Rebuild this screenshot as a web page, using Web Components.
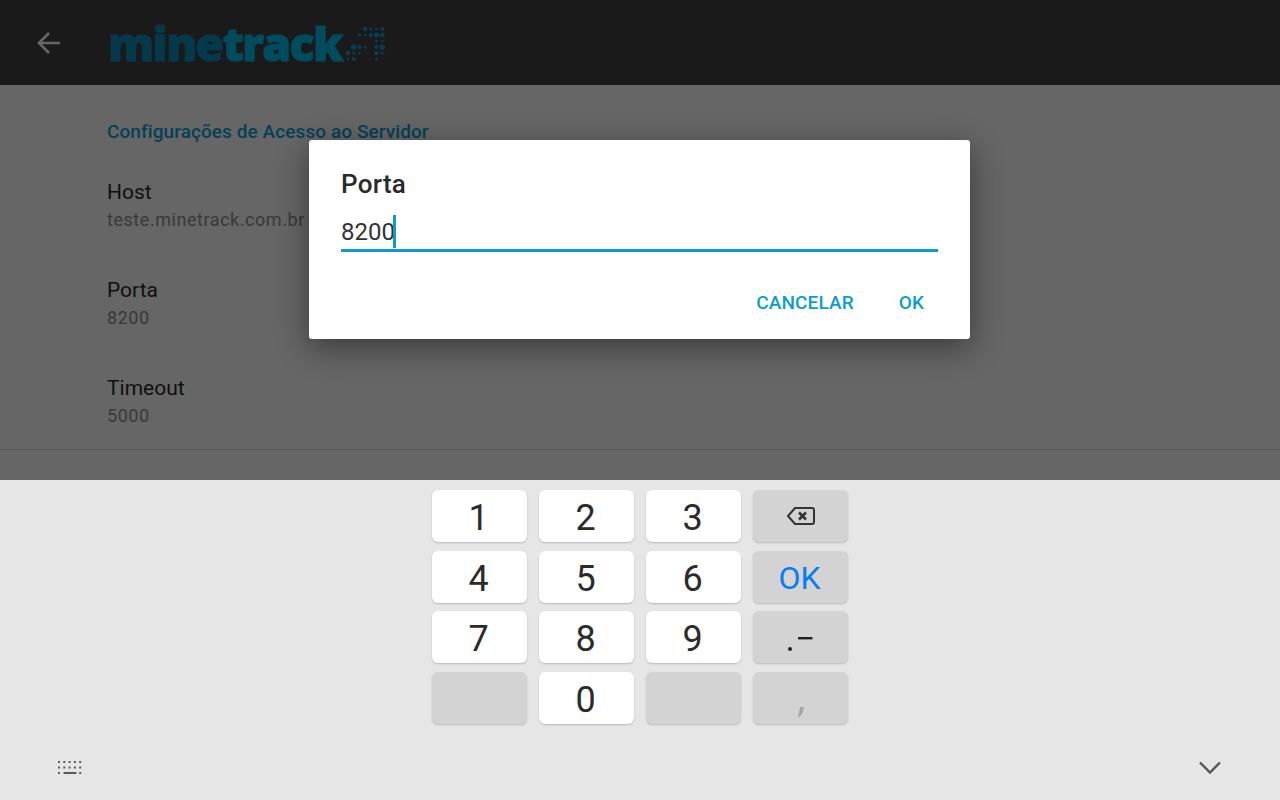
<!DOCTYPE html>
<html lang="pt-BR">
<head>
<meta charset="utf-8">
<title>minetrack</title>
<style>
  html, body { margin: 0; height: 100%; overflow: hidden; }
  body { font-family: Roboto, "Liberation Sans", sans-serif; background: #e6e6e6; }
</style>
</head>
<body>
<settings-screen>
  <app-toolbar slot="top"></app-toolbar>
  <pref-category slot="list">Configurações de Acesso ao Servidor</pref-category>
  <pref-item slot="list" label="Host" value="teste.minetrack.com.br"></pref-item>
  <pref-item slot="list" label="Porta" value="8200"></pref-item>
  <pref-item slot="list" label="Timeout" value="5000" divider></pref-item>
  <port-dialog slot="overlay" heading="Porta" value="8200"></port-dialog>
  <num-keypad slot="bottom"></num-keypad>
</settings-screen>

<script>
class SettingsScreen extends HTMLElement {
    constructor() {
        super();
        this.attachShadow({ mode: 'open' });
        this.shadowRoot.innerHTML = `
            <style>
                :host { display: flex; flex-direction: column; width: 1280px; height: 800px; }
                .page { position: relative; height: 480px; background: #fff; overflow: hidden; display: flex; flex-direction: column; }
                .list { display: flex; flex-direction: column; }
                .scrim { position: absolute; inset: 0; background: rgba(0,0,0,.6); }
            </style>
            <div class="page">
                <slot name="top"></slot>
                <div class="list"><slot name="list"></slot></div>
                <div class="scrim"></div>
                <slot name="overlay"></slot>
            </div>
            <slot name="bottom"></slot>
        `;
    }
}

class AppToolbar extends HTMLElement {
    constructor() {
        super();
        this.attachShadow({ mode: 'open' });
        // dots of the logo mark, row by row
        const rows = [
            [0, 0, 0, 1, 1, 1, 1],
            [0, 0, 1, 1, 1, 1, 1],
            [0, 0, 0, 0, 0, 1, 1],
            [0, 1, 1, 1, 0, 1, 1],
            [1, 1, 1, 0, 0, 1, 1],
            [1, 1, 0, 0, 0, 1, 0]
        ];
        const sizes = [1.3, 2, 2.7, 2.3, 1.6];
        let dots = '';
        rows.forEach((row, y) => row.forEach((on, x) => {
            if (on) dots += `<circle cx="${3 + x * 5.7}" cy="${3 + y * 6}" r="${sizes[(x + y * 2) % 5]}"/>`;
        }));
        this.shadowRoot.innerHTML = `
            <style>
                :host { display: flex; align-items: center; height: 85px; background: #424242; flex: none; }
                .back { width: 26px; height: 26px; margin-left: 36px; color: #fff; display: block; }
                .logo { display: flex; align-items: center; margin-left: 46px; font: 800 46px/1 "Open Sans", Lato, sans-serif; letter-spacing: -1.4px; -webkit-text-stroke: 1.1px currentColor; }
                .mine { color: #00a0d8; opacity: .82; }
                .track { color: #00bcec; }
                .mark { width: 40px; height: 36px; fill: #00b4e6; margin-left: 3px; margin-top: 2px; opacity: .8; filter: blur(.5px); }
            </style>
            <svg class="back" viewBox="0 0 26 26" fill="none" stroke="currentColor" stroke-width="2.6">
                <path d="M24 13H4M13 3 3 13l10 10"/>
            </svg>
            <div class="logo"><span class="mine">mine</span><span class="track">track</span>
                <svg class="mark" viewBox="0 0 40 36">${dots}</svg>
            </div>
        `;
    }
}

class PrefCategory extends HTMLElement {
    constructor() {
        super();
        this.attachShadow({ mode: 'open' });
        this.shadowRoot.innerHTML = `
            <style>
                :host { display: block; padding: 36px 0 0 107px; height: 45px; color: #0ba4dc; font: 500 19px/22px Roboto, sans-serif; letter-spacing: .08px; }
            </style>
            <slot></slot>
        `;
    }
}

class PrefItem extends HTMLElement {
    constructor() {
        super();
        this.attachShadow({ mode: 'open' });
    }

    connectedCallback() {
        this.render();
    }

    render() {
        this.shadowRoot.innerHTML = `
            <style>
                :host { display: block; height: 98px; padding-left: 107px; box-sizing: border-box; padding-top: 12px; font-family: Roboto, sans-serif; }
                :host([divider]) { height: 88px; }
                .label { font-size: 21px; line-height: 28px; color: #2a2a2a; }
                .value { font-size: 18px; line-height: 26px; color: #8f8f8f; letter-spacing: .55px; margin-top: 1px; }
            </style>
            <div class="label">${this.getAttribute('label')}</div>
            <div class="value">${this.getAttribute('value')}</div>
        `;
        if (this.hasAttribute('divider')) {
            this.style.borderBottom = '1px solid #d8d8d8';
        }
    }
}

class PortDialog extends HTMLElement {
    constructor() {
        super();
        this.attachShadow({ mode: 'open' });
    }

    connectedCallback() {
        this.shadowRoot.innerHTML = `
            <style>
                :host { position: absolute; left: 309px; top: 140px; width: 661px; height: 199px; box-sizing: border-box; padding: 28px 32px 0; background: #fff; border-radius: 3px;
                    box-shadow: 0 8px 32px rgba(0,0,0,.45); font-family: Roboto, sans-serif; display: flex; flex-direction: column; }
                h2 { margin: 0; font: 500 26px/32px Roboto, sans-serif; letter-spacing: .3px; color: #2a2a2a; }
                .field { display: flex; align-items: center; margin-top: 13px; border-bottom: 3px solid #0b9dcd; font-size: 24px; color: #333; padding-top: 1px; height: 35px; }
                .field span:first-child { margin-top: 0; }
                .caret { width: 3px; height: 33px; background: #0b9dcd; margin-left: -2px; margin-top: -1px; }
                .actions { display: flex; justify-content: flex-end; gap: 45px; margin-top: 39px; padding-right: 14px; }
                .btn { font: 500 19px/24px Roboto, sans-serif; color: #0b9dcd; letter-spacing: .1px; }
            </style>
            <h2>${this.getAttribute('heading')}</h2>
            <div class="field"><span>${this.getAttribute('value')}</span><span class="caret"></span></div>
            <div class="actions"><span class="btn">CANCELAR</span><span class="btn">OK</span></div>
        `;
    }
}

class KeyCap extends HTMLElement {
    constructor() {
        super();
        this.attachShadow({ mode: 'open' });
        this.shadowRoot.innerHTML = `
            <style>
                :host { display: flex; align-items: center; justify-content: center; height: 48px; padding: 4px 2px 0 0; border-radius: 6px; background: #fff; color: #2b2b2b;
                    font: 400 36px/1 Roboto, sans-serif; box-shadow: 0 1px 2px rgba(0,0,0,.2); }
                :host([fn]) { background: #d3d3d3; }
                :host([accent]) { color: #0a7df2; font-size: 32px; padding-top: 2px; height: 50px; }
                :host([icon]) { padding: 0; height: 52px; }
            </style>
            <slot></slot>
        `;
    }
}

class NumKeypad extends HTMLElement {
    constructor() {
        super();
        this.attachShadow({ mode: 'open' });
        const keys = [
            ['1'], ['2'], ['3'], ['backspace'],
            ['4'], ['5'], ['6'], ['OK'],
            ['7'], ['8'], ['9'], ['dot'],
            [''], ['0'], [''], ['comma']
        ];
        const cap = ([k]) => {
            if (k === 'backspace') return `<key-cap fn icon><svg width="28" height="20" viewBox="0 0 28 20" fill="none" stroke="#333" stroke-width="2"><path d="M8 2h17a2 2 0 0 1 2 2v12a2 2 0 0 1-2 2H8l-7-8z"/><path d="m12 6.500 7 7m0-7-7 7" stroke-width="2.500"/></svg></key-cap>`;
            if (k === 'OK') return `<key-cap fn accent>OK</key-cap>`;
            if (k === 'dot') return `<key-cap fn icon><svg width="28" height="28" viewBox="0 0 28 28" fill="#222"><circle cx="3" cy="26" r="2"/><rect x="11" y="14" width="14.500" height="2.400"/></svg></key-cap>`;
            if (k === 'comma') return `<key-cap fn icon><svg width="6" height="10" viewBox="0 0 6 10" fill="#a6a6a6" style="margin-top:28px"><path d="M2 0h4L4.500 6 1.500 10H0l1-4z"/></svg></key-cap>`;
            if (k === '') return `<key-cap fn icon></key-cap>`;
            return `<key-cap>${k}</key-cap>`;
        };
        let dots = '';
        [0, 1].forEach(r => [0, 1, 2, 3, 4].forEach(c => {
            dots += `<rect x="${c * 5.3}" y="${r * 5.500}" width="2" height="2"/>`;
        }));
        this.shadowRoot.innerHTML = `
            <style>
                :host { display: block; position: relative; flex: 1; background: #e6e6e6; }
                .grid { display: grid; grid-template-columns: repeat(4, 95.5px); column-gap: 11.5px; row-gap: 8.67px; width: max-content; margin: 10px auto 0; }
                .hide, .low { position: absolute; display: block; }
                .low { left: 58px; top: 281px; fill: #5a5a5a; }
                .hide { left: 1199px; top: 281px; }
            </style>
            <div class="grid">${keys.map(cap).join('')}</div>
            <svg class="low" width="24" height="14" viewBox="0 0 24 14">${dots}<rect x="0" y="11" width="2" height="2"/><rect x="5.500" y="11" width="13" height="2"/><rect x="21.200" y="11" width="2" height="2"/></svg>
            <svg class="hide" width="22" height="13" viewBox="0 0 22 13" fill="none" stroke="#555" stroke-width="2.400"><path d="m1 1.500 10 10 10-10"/></svg>
        `;
    }
}

customElements.define('settings-screen', SettingsScreen);
customElements.define('app-toolbar', AppToolbar);
customElements.define('pref-category', PrefCategory);
customElements.define('pref-item', PrefItem);
customElements.define('port-dialog', PortDialog);
customElements.define('key-cap', KeyCap);
customElements.define('num-keypad', NumKeypad);
</script>
</body>
</html>
